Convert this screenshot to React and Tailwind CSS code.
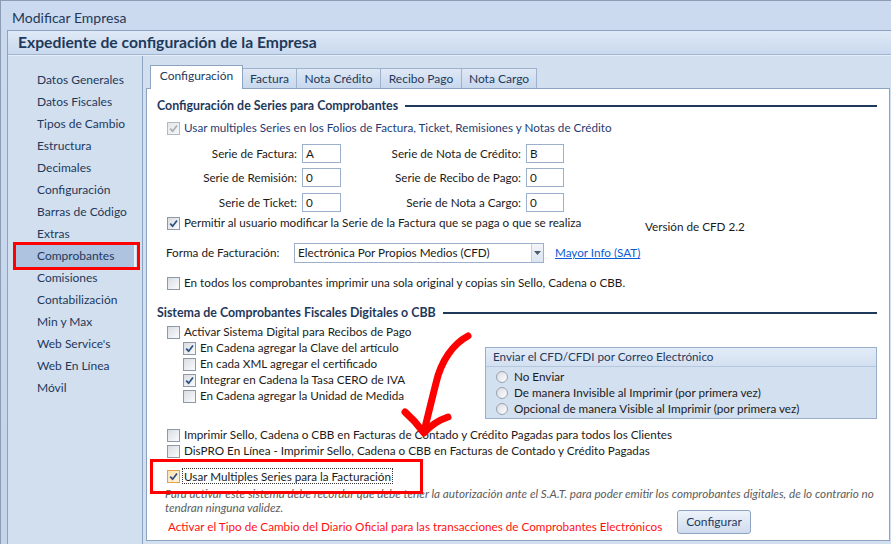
import clsx from 'clsx';

const SIDEBAR = [
  'Datos Generales', 'Datos Fiscales', 'Tipos de Cambio', 'Estructura', 'Decimales',
  'Configuración', 'Barras de Código', 'Extras', 'Comprobantes', 'Comisiones',
  'Contabilización', 'Min y Max', "Web Service's", 'Web En Línea', 'Móvil',
];

const TABS = [
  { label: 'Configuración', w: 'w-[93px]', active: true },
  { label: 'Factura', w: 'w-[55px]' },
  { label: 'Nota Crédito', w: 'w-[85px]' },
  { label: 'Recibo Pago', w: 'w-[82px]' },
  { label: 'Nota Cargo', w: 'w-[76px]' },
];

function Box({ checked, disabled, hot }) {
  return (
    <span
      className={clsx(
        'flex h-[13px] w-[13px] shrink-0 items-center justify-center border',
        hot
          ? 'border-[#e2a049] bg-gradient-to-br from-[#fbe2b4] to-[#fff4de]'
          : disabled
            ? 'border-[#b4b9c0] bg-gradient-to-br from-[#e6e8eb] to-[#f4f5f6]'
            : 'border-[#8e98a6] bg-gradient-to-br from-[#d9dde2] to-[#fafbfc]'
      )}
    >
      {checked && (
        <svg viewBox="0 0 9 9" className="h-[9px] w-[9px]">
          <path
            d="M1.2 4.6 L3.6 7.2 L8 1.4"
            fill="none"
            stroke={disabled ? '#a9aeb5' : '#2f4f82'}
            strokeWidth="1.7"
          />
        </svg>
      )}
    </span>
  );
}

function Check({ children, checked, disabled, hot, className, text }) {
  return (
    <div className={clsx('flex h-[16px] items-center', className)}>
      <Box checked={checked} disabled={disabled} hot={hot} />
      <span className={clsx('ml-[4px] whitespace-nowrap', text)}>{children}</span>
    </div>
  );
}

function Radio({ children }) {
  return (
    <div className="flex h-[16px] items-center pl-[10px]">
      <span className="flex h-[12px] w-[12px] shrink-0 items-center justify-center rounded-full border border-[#9aa3ae] bg-gradient-to-br from-[#d7dbe0] to-[#fbfcfd]">
        <span className="h-[6px] w-[6px] rounded-full bg-gradient-to-br from-[#e3e6ea] to-[#f6f7f8]" />
      </span>
      <span className="ml-[6px] whitespace-nowrap">{children}</span>
    </div>
  );
}

function Heading({ children, className }) {
  return (
    <div className={clsx('flex h-[16px] items-center pl-[10px] pr-[12px]', className)}>
      <span className="whitespace-nowrap text-[12.4px] font-bold text-[#1e395b]">{children}</span>
      <span className="ml-[7px] h-[2px] flex-1 bg-[#1e395b]" />
    </div>
  );
}

function Field({ value, w }) {
  return (
    <span className={clsx('flex h-[19px] items-center border border-[#9db0cb] bg-white pl-[3px]', w)}>
      {value}
    </span>
  );
}

function SerieRow({ a, av, b, bv, className }) {
  return (
    <div className={clsx('flex items-center', className)}>
      <span className="w-[150px] text-right">{a}</span>
      <span className="ml-[5px]"><Field value={av} w="w-[39px]" /></span>
      <span className="w-[180px] text-right">{b}</span>
      <span className="ml-[5px]"><Field value={bv} w="w-[38px]" /></span>
    </div>
  );
}

export default function App() {
  return (
    <div className="relative flex h-[544px] w-[891px] flex-col overflow-hidden border-l border-t border-[#8b9cb3] bg-gradient-to-b from-[#cbdaee] to-[#c3d4eb] font-[Lato,sans-serif] text-[11.7px] text-[#1b1b1b]">
      {/* window title */}
      <div className="flex h-[29px] shrink-0 items-center pl-[11px] pt-[4px] text-[14px] text-[#1e395b]">
        Modificar Empresa
      </div>

      <div className="ml-[6px] flex flex-1 flex-col border-l border-t border-[#8ea3c2] bg-[#d2dfef]">
        <div className="flex h-[24px] shrink-0 items-center border-b border-[#9fb5d3] bg-gradient-to-b from-[#dfe9f6] to-[#c9d9ee] pl-[10px] pt-[1px] text-[15.7px] font-bold text-[#1e395b]">
          Expediente de configuración de la Empresa
        </div>

        <div className="flex flex-1 border-t border-[#e6eef8]">
          {/* sidebar */}
          <div className="flex w-[135px] shrink-0 flex-col border-r border-[#8ea3c2] pt-[13px] text-[12px] text-[#1e395b]">
            {SIDEBAR.map((s) =>
              s === 'Comprobantes' ? (
                <div
                  key={s}
                  className="ml-[5px] mr-[6px] flex h-[22px] items-center border-r-2 border-[#e9f0f9] bg-[#aec3df] pl-[24px]"
                >
                  {s}
                </div>
              ) : (
                <div key={s} className="flex h-[22px] items-center pl-[29px]">
                  {s}
                </div>
              )
            )}
          </div>

          {/* tabs + page */}
          <div className="flex flex-1 flex-col pl-[3px] pr-px">
            <div className="flex h-[32px] items-end pl-[4px] text-[12px] text-[#1e395b]">
              {TABS.map((t) =>
                t.active ? (
                  <div
                    key={t.label}
                    className={clsx(
                      'z-10 -mb-px flex h-[24px] items-center justify-center border border-b-0 border-[#8ea3c2] bg-white pb-[3px]',
                      t.w
                    )}
                  >
                    {t.label}
                  </div>
                ) : (
                  <div
                    key={t.label}
                    className={clsx(
                      '-ml-px flex h-[20px] items-center justify-center border border-b-0 border-[#9fb3cf] bg-gradient-to-b from-[#dfe8f5] to-[#c8d8ed] pt-[1px]',
                      t.w
                    )}
                  >
                    {t.label}
                  </div>
                )
              )}
            </div>

            <div className="mb-[3px] flex flex-1 flex-col border border-[#8ea3c2] bg-white">
              <Heading className="mt-[9px]">Configuración de Series para Comprobantes</Heading>
              <Check checked disabled className="mt-[6px] pl-[20px]" text="text-[#1f3d73]">
                Usar multiples Series en los Folios de Factura, Ticket, Remisiones y Notas de Crédito
              </Check>
              <SerieRow className="mt-[8px]" a="Serie de Factura:" av="A" b="Serie de Nota de Crédito:" bv="B" />
              <SerieRow className="mt-[5px]" a="Serie de Remisión:" av="0" b="Serie de Recibo de Pago:" bv="0" />
              <SerieRow className="mt-[6px]" a="Serie de Ticket:" av="0" b="Serie de Nota a Cargo:" bv="0" />

              <div className="mt-[3px] flex h-[16px] items-start pl-[20px]">
                <Check checked>
                  <span className="inline-block w-[461px]">
                    Permitir al usuario modificar la Serie de la Factura que se paga o que se realiza
                  </span>
                </Check>
                <span className="mt-[3px] whitespace-nowrap">Versión de CFD 2.2</span>
              </div>

              <div className="mt-[12px] flex items-center pl-[19px]">
                <span className="w-[128px]">Forma de Facturación:</span>
                <div className="flex h-[20px] w-[250px] items-center border border-[#9db0cb] bg-white">
                  <span className="flex-1 pl-[3px]">Electrónica Por Propios Medios (CFD)</span>
                  <span className="flex h-full w-[12px] items-center justify-center border-l border-[#c3cfdf] bg-gradient-to-b from-[#f3f6fa] to-[#dbe4f0]">
                    <svg viewBox="0 0 7 4" className="h-[4px] w-[7px]">
                      <path d="M0 0 H7 L3.5 4 Z" fill="#4c5a6c" />
                    </svg>
                  </span>
                </div>
                <span className="ml-[11px] text-[#0b5cd6] underline">Mayor Info (SAT)</span>
              </div>

              <Check className="mt-[12px] pl-[20px]">
                En todos los comprobantes imprimir una sola original y copias sin Sello, Cadena o CBB.
              </Check>

              <Heading className="mt-[14px]">Sistema de Comprobantes Fiscales Digitales o CBB</Heading>
              <Check className="mt-[3px] pl-[20px]">Activar Sistema Digital para Recibos de Pago</Check>

              <div className="flex">
                <div className="flex w-[338px] shrink-0 flex-col pl-[36px]">
                  <Check checked>En Cadena agregar la Clave del artículo</Check>
                  <Check>En cada XML agregar el certificado</Check>
                  <Check checked>Integrar en Cadena la Tasa CERO de IVA</Check>
                  <Check>En Cadena agregar la Unidad de Medida</Check>
                </div>
                <div className="mt-[7px] flex h-[72px] w-[392px] flex-col border border-[#98aecb] bg-[#d3e0f0]">
                  <div className="flex h-[19px] items-center border-b border-[#b6c8df] bg-gradient-to-b from-[#e3ecf8] to-[#d3e0f1] pl-[7px] text-[#1e395b]">
                    Enviar el CFD/CFDI por Correo Electrónico
                  </div>
                  <div className="pt-[2px]">
                    <Radio>No Enviar</Radio>
                    <Radio>De manera Invisible al Imprimir (por primera vez)</Radio>
                    <Radio>Opcional de manera Visible al Imprimir (por primera vez)</Radio>
                  </div>
                </div>
              </div>

              <Check className="mt-[8px] pl-[20px]">
                Imprimir Sello, Cadena o CBB en Facturas de Contado y Crédito Pagadas para todos los Clientes
              </Check>
              <Check className="pl-[20px]">
                DisPRO En Línea - Imprimir Sello, Cadena o CBB en Facturas de Contado y Crédito Pagadas
              </Check>
              <div className="mt-[9px] flex h-[16px] items-center pl-[20px]">
                <Box checked hot />
                <span className="ml-[2px] whitespace-nowrap border border-dotted border-[#333] px-[1px] leading-[14px]">
                  Usar Multiples Series para la Facturación
                </span>
              </div>

              <div className="mt-[2px] pl-[18px] text-[11.7px] italic leading-[14px] text-[#5c5c5c]">
                <div className="whitespace-nowrap">
                  Para activar este sistema debe recordar que debe tener la autorización ante el S.A.T. para poder emitir los comprobantes digitales, de lo contrario no
                </div>
                <div>tendran ninguna validez.</div>
              </div>

              <div className="-mt-[4px] flex items-start pl-[21px]">
                <span className="mt-[8px] w-[509px] shrink-0 whitespace-nowrap text-[#ff1010]">
                  Activar el Tipo de Cambio del Diario Oficial para las transacciones de Comprobantes Electrónicos
                </span>
                <button className="flex h-[24px] w-[74px] items-center justify-center rounded-[3px] border border-[#8ea3c2] bg-gradient-to-b from-[#eef3fa] to-[#cfdcee] text-[12px] text-[#1e395b]">
                  Configurar
                </button>
              </div>
            </div>
          </div>
        </div>
      </div>

      {/* annotations drawn over the screenshot */}
      <div className="pointer-events-none absolute left-[12px] top-[241px] h-[28px] w-[127px] border-[3px] border-[#ff0000]" />
      <div className="pointer-events-none absolute left-[149px] top-[458px] h-[35px] w-[273px] border-[3px] border-[#ff0000]" />
      <svg className="pointer-events-none absolute left-0 top-0" width="891" height="544">
        <path
          d="M467 335 C452 343 440 360 435 382 C430 402 426 418 423 431"
          fill="none"
          stroke="#ff0000"
          strokeWidth="7"
          strokeLinecap="round"
        />
        <path
          d="M404 411 C412 418 418 425 423 432 C430 424 438 419 447 416"
          fill="none"
          stroke="#ff0000"
          strokeWidth="7"
          strokeLinecap="round"
          strokeLinejoin="round"
        />
      </svg>
    </div>
  );
}
